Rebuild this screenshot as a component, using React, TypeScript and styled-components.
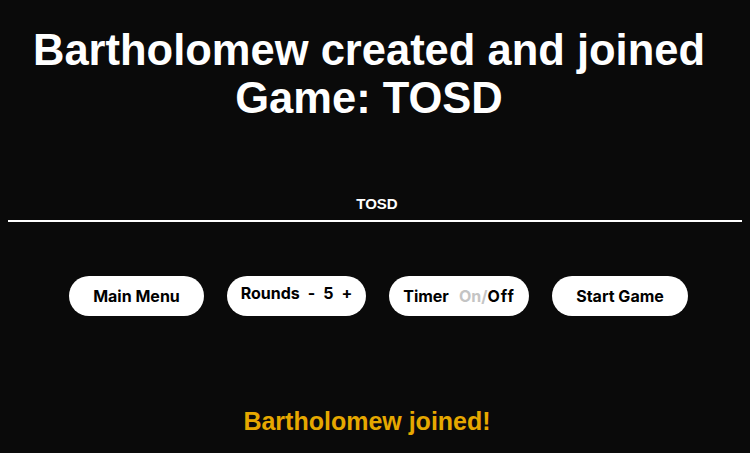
import React from "react";
import styled, { createGlobalStyle } from "styled-components";

const Global = createGlobalStyle`
  html, body { margin: 0; padding: 0; background: #0a0a0a; }
  body { margin: 8px; font-family: "Liberation Sans", Arial, sans-serif; color: #fff; }
`;

const Page = styled.div`
  display: flex;
  flex-direction: column;
  align-items: stretch;
`;

const Title = styled.h1`
  margin: 18px 20px 0 8px;
  text-align: center;
  font-size: 43.5px;
  line-height: 48px;
  font-weight: 700;
  color: #fff;
`;

const GameName = styled.div`
  margin-top: 73px;
  text-align: center;
  font-size: 15px;
  font-weight: 700;
  padding-left: 4px;
`;

const Divider = styled.div`
  margin: 8px -2px 0 -1px;
  height: 2px;
  background: #fff;
`;

const Controls = styled.div`
  display: flex;
  justify-content: center;
  gap: 23px;
  margin-top: 54px;
  padding-left: 7px;
`;

const Pill = styled.button<{ $w: number; $up?: boolean; $gap?: number }>`
  width: ${(p) => p.$w}px;
  height: 40px;
  border: none;
  border-radius: 20px;
  background: #fff;
  color: #000;
  font-family: Inter, "Liberation Sans", sans-serif;
  font-weight: 700;
  font-size: 16px;
  display: flex;
  align-items: center;
  justify-content: center;
  gap: ${(p) => p.$gap ?? 10}px;
  padding: 0;
  padding-bottom: ${(p) => (p.$up ? 6 : 0)}px;
  cursor: pointer;
`;

const Muted = styled.span`
  color: #c4c4c4;
`;

const Spaced = styled.span`
  letter-spacing: 1px;
`;

const Joined = styled.div`
  margin-top: 91px;
  text-align: center;
  color: #e6a800;
  font-size: 25px;
  font-weight: 700;
  padding-right: 16px;
`;

export default function App() {
  return (
    <>
      <Global />
      <Page>
        <Title>Bartholomew created and joined Game: TOSD</Title>
        <GameName>TOSD</GameName>
        <Divider />
        <Controls>
          <Pill $w={135}>Main Menu</Pill>
          <Pill $w={139} $up $gap={8}>
            <span>Rounds</span>
            <span>-</span>
            <span>5</span>
            <span>+</span>
          </Pill>
          <Pill $w={140}>
            <span>Timer</span>
            <span>
              <Muted>On/</Muted>
              <Spaced>Off</Spaced>
            </span>
          </Pill>
          <Pill $w={136}>Start Game</Pill>
        </Controls>
        <Joined>Bartholomew joined!</Joined>
      </Page>
    </>
  );
}
